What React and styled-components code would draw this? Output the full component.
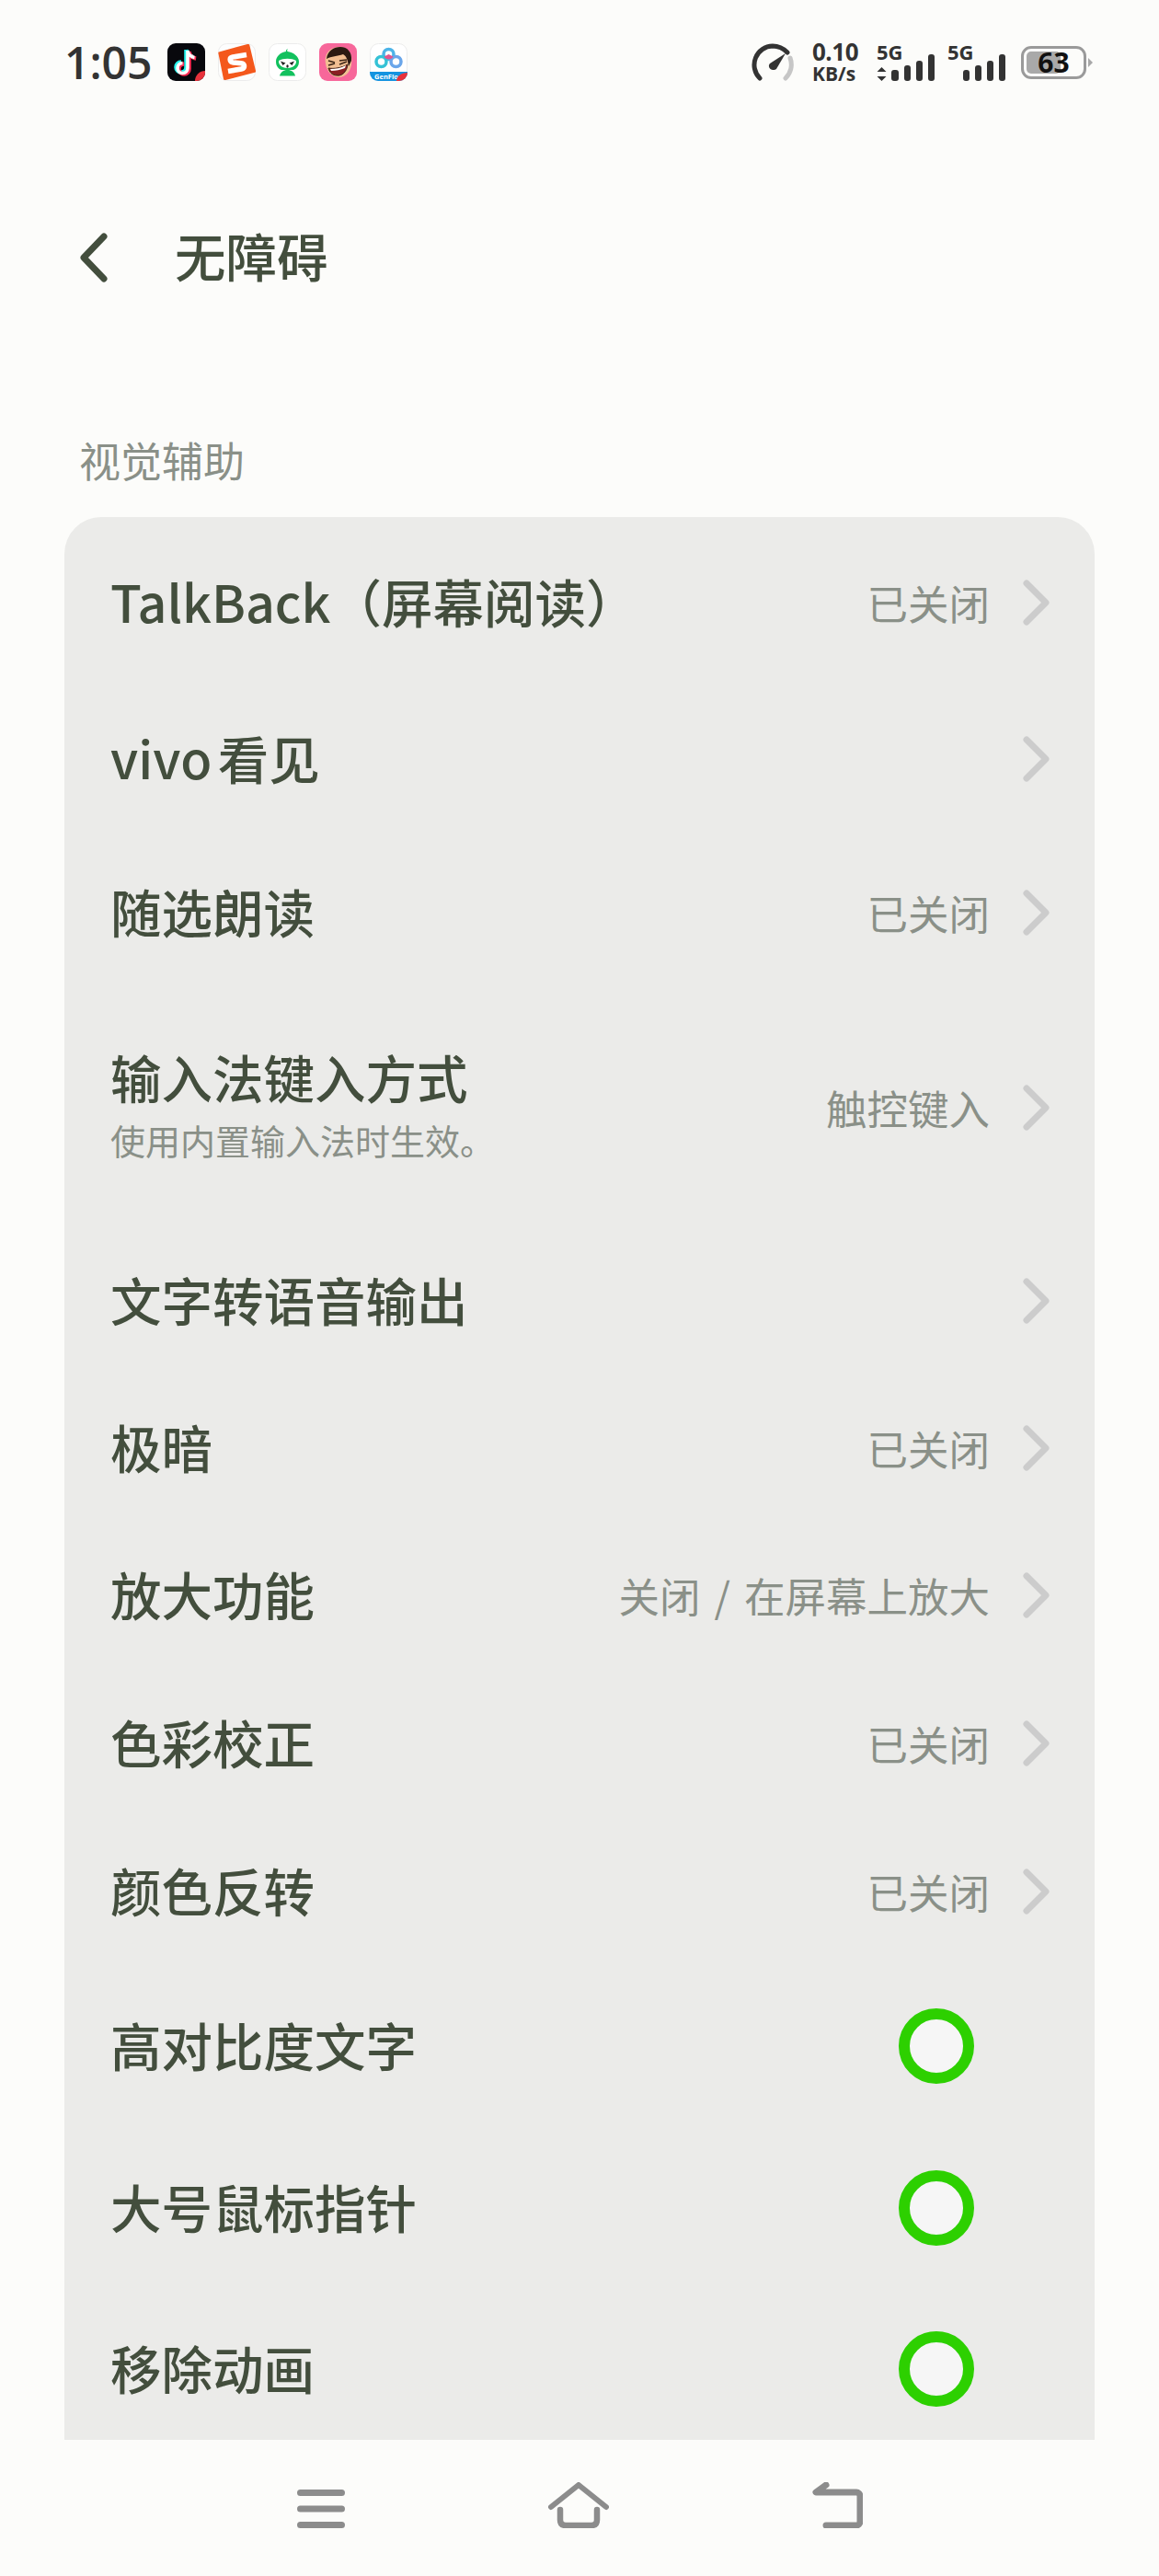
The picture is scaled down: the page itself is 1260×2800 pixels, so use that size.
import React from 'react';
import styled, { createGlobalStyle } from 'styled-components';

const GlobalStyle = createGlobalStyle`
html, body {
  margin: 0;
  padding: 0;
  background: #fcfcfa;
}
`
const Page = styled.div`
font-family: 'Noto Sans CJK SC', 'Noto Sans', sans-serif;
width: 1260px;
height: 2800px;
display: flex;
flex-direction: column;
overflow: hidden;
background: #fcfcfa;
`
const StatusBar = styled.div`
display: flex;
justify-content: space-between;
align-items: center;
height: 41px;
padding: 47px 79px 0 70px;
`
const StatusLeft = styled.div`
display: flex;
align-items: center;
`
const StatusRight = styled.div`
display: flex;
align-items: center;
`
const Time = styled.div`
font-family: 'Open Sans', sans-serif;
font-size: 48px;
font-weight: 600;
line-height: 41px;
color: #333333;
width: 112px;
`
const AppIcons = styled.div`
display: flex;
gap: 14px;
`
const AppIcon = styled.svg`
width: 41px;
height: 41px;
display: block;
`
const Gauge = styled.svg`
width: 46px;
height: 41px;
display: block;
`
const Speed = styled.div`
display: flex;
flex-direction: column;
align-items: flex-start;
font-family: 'Open Sans', sans-serif;
font-weight: 700;
color: #333333;
margin-left: 20px;
width: 50px;
`
const SpeedValue = styled.div`
font-size: 26px;
line-height: 23px;
letter-spacing: -0.5px;
`
const SpeedUnit = styled.div`
font-size: 21px;
line-height: 21px;
margin-top: 2px;
white-space: nowrap;
`
const Signal = styled.div`
position: relative;
width: 63px;
height: 41px;
margin-left: ${(p) => p.$gap}px;
`
const SignalLabel = styled.span`
position: absolute;
left: 0;
top: -3px;
font-family: 'Open Sans', sans-serif;
font-size: 22px;
line-height: 24px;
font-weight: 700;
color: #333333;
`
const SignalBars = styled.svg`
width: 63px;
height: 41px;
display: block;
`
const Battery = styled.div`
position: relative;
box-sizing: border-box;
width: 71px;
height: 36px;
margin-left: 17px;
border: 3px solid #9a9a9a;
border-radius: 11px;
padding: 3px;
&::after {
  content: '';
  position: absolute;
  right: -10px;
  top: 10px;
  width: 0;
  height: 0;
  border-left: 5px solid #a8a8a8;
  border-top: 5px solid transparent;
  border-bottom: 5px solid transparent;
}
`
const BatteryFill = styled.div`
background: #a9a9a9;
height: 100%;
border-radius: 5px;
`
const BatteryText = styled.span`
position: absolute;
left: 0;
right: 0;
top: 0;
bottom: 0;
display: flex;
align-items: center;
justify-content: center;
font-family: 'Open Sans', sans-serif;
font-size: 30px;
font-weight: 700;
color: #111111;
`
const Header = styled.div`
display: flex;
align-items: center;
height: 80px;
padding: 152px 0 0 86px;
`
const BackIcon = styled.svg`
width: 32px;
height: 54px;
display: block;
`
const Title = styled.h1`
margin: 0 0 6px 72px;
font-size: 55.5px;
line-height: 74px;
font-weight: 500;
color: #434e3d;
`
const SectionLabel = styled.div`
font-size: 45px;
line-height: 60px;
color: #8a9088;
margin: 150px 0 0 86px;
height: 61px;
`
const Card = styled.div`
flex: 1;
min-height: 0;
margin: 31px 70px 0 70px;
padding-top: 7px;
background: #ebebe9;
border-radius: 40px 40px 0 0;
overflow: hidden;
`
const Row = styled.div`
box-sizing: border-box;
display: flex;
align-items: center;
height: ${(p) => p.$h}px;
padding: 0 ${(p) => (p.$toggle ? 131 : 49)}px 0 50px;
`
const RowText = styled.div`
flex: 1;
min-width: 0;
`
const RowTitle = styled.div`
font-size: 55.5px;
line-height: 66px;
font-weight: 500;
word-spacing: -6px;
color: #434e3d;
white-space: nowrap;
padding-bottom: 4px;
`
const RowSub = styled.div`
font-size: 38px;
line-height: 44px;
color: #8a9088;
margin: 10px 0 10px 0;
white-space: nowrap;
`
const RowValue = styled.div`
font-size: 44.5px;
line-height: 60px;
word-spacing: 5px;
color: #8a9088;
margin-right: 36px;
white-space: nowrap;
`
const Chevron = styled.svg`
width: 29px;
height: 50px;
display: block;
`
const Toggle = styled.div`
box-sizing: border-box;
width: 82px;
height: 82px;
border: 12px solid #2dd000;
border-radius: 50%;
background: #f6f6f6;
`
const NavBar = styled.div`
height: 148px;
flex-shrink: 0;
display: flex;
align-items: flex-start;
justify-content: center;
gap: 221px;
padding-top: 46px;
box-sizing: border-box;
background: #fcfcfa;
`
const NavIcon = styled.svg`
width: ${(p) => p.$w}px;
height: 50px;
display: block;
`

const rows = [
  { title: 'TalkBack（屏幕阅读）', value: '已关闭', h: 172 },
  { title: 'vivo 看见', h: 167 },
  { title: '随选朗读', value: '已关闭', h: 168 },
  { title: '输入法键入方式', sub: '使用内置输入法时生效。', value: '触控键入', h: 256 },
  { title: '文字转语音输出', h: 163 },
  { title: '极暗', value: '已关闭', h: 158 },
  { title: '放大功能', value: '关闭 / 在屏幕上放大', h: 161 },
  { title: '色彩校正', value: '已关闭', h: 162 },
  { title: '颜色反转', value: '已关闭', h: 160 },
  { title: '高对比度文字', toggle: true, h: 176 },
  { title: '大号鼠标指针', toggle: true, h: 175 },
  { title: '移除动画', toggle: true, h: 175 },
];

const TikTok = () => (
  <AppIcon viewBox="0 0 41 41">
    <rect width="41" height="41" rx="9" fill="#08080d" />
    <path d="M22 8v19a5.500 5.500 0 1 1-5.500-5.500M22 8c.5 4 3.500 7 7.500 7.500" fill="none" stroke="#25f4ee" strokeWidth="4.400" transform="translate(-1.600 -1)" />
    <path d="M22 8v19a5.500 5.500 0 1 1-5.500-5.500M22 8c.5 4 3.500 7 7.500 7.500" fill="none" stroke="#fe2c55" strokeWidth="4.400" transform="translate(1.600 1)" />
    <path d="M22 8v19a5.500 5.500 0 1 1-5.500-5.500M22 8c.5 4 3.500 7 7.500 7.500" fill="none" stroke="#ffffff" strokeWidth="3.600" />
    <path d="M41 30v2a9 9 0 0 1-9 9h-2a11 11 0 0 1 11-11z" fill="#e8323c" />
  </AppIcon>
);

const Sogou = () => (
  <AppIcon viewBox="0 0 41 41">
    <rect x=".5" y=".5" width="40" height="40" rx="9" fill="#fdfdfd" stroke="#ececec" />
    <path d="M1 9.500 32 1c1-.3 2 0 2.300 1L41 30c.2 1 0 1.500-1 1.800L8 40c-1 .3-1.700 0-2-1L.4 11c-.2-.8 0-1.300.6-1.500z" fill="#f4581c" />
    <path d="M31 12.500 16 15c-4 .7-3.500 5.500.5 6l8.500.7c4.500.4 4.500 5.600.5 6.300L11 30.500" fill="none" stroke="#ffffff" strokeWidth="5.600" />
  </AppIcon>
);

const Alien = () => (
  <AppIcon viewBox="0 0 41 41">
    <rect x=".5" y=".5" width="40" height="40" rx="9" fill="#ffffff" stroke="#ececec" />
    <path d="M21 6c-1 1-1 2-.5 3C27 10 33 14 33 20c0 5-3 8-6 9H14c-3-1-6-4-6-9 0-6 5-10 11-11-.5-1 .5-2.500 2-3z" fill="#12c15e" />
    <path d="M11 19c5-3 14-3 19 0 .5 4-3 8-9.500 8S10.500 23 11 19z" fill="#ffffff" />
    <path d="M13 19.500l5.500 2-3 2.500zM28 19.500l-5.500 2 3 2.500z" fill="#222222" />
    <ellipse cx="20.500" cy="25" rx="1.200" ry="1.800" fill="#222222" />
    <path d="M12 35.500c1-4 4-6.500 8.500-6.500s7.500 2.500 8.500 6.500z" fill="#12c15e" />
  </AppIcon>
);

const Face = () => (
  <AppIcon viewBox="0 0 41 41">
    <rect width="41" height="41" rx="9" fill="#f7679a" />
    <path d="M7 22C5 10 13 4 22 4c10 0 15 8 13 19-1 9-8 15-15 14-7-1-12-7-13-15z" fill="#f2bf92" />
    <path d="M8 17C9 8 16 4 23 4c8 0 13 6 12 15l-3 6c-1-6-2-11-6-13-6 2-13 2-18 5z" fill="#2c1a12" />
    <path d="M10 19l7 2M10 24l7-2M22 19l8-1M22 23l8-3" stroke="#3a2415" strokeWidth="1.600" fill="none" />
    <path d="M10 27c6 1 14 0 21-4-1 8-6 13-12 12-5 0-8-4-9-8z" fill="#8a1f22" stroke="#3a2415" strokeWidth="1" />
    <path d="M12 28c5 0 12-1 17-4l-1 3c-5 2-10 3-15 3z" fill="#ffffff" />
  </AppIcon>
);

const GenFlow = () => (
  <AppIcon viewBox="0 0 41 41">
    <rect x=".5" y=".5" width="40" height="40" rx="9" fill="#ffffff" stroke="#ececec" />
    <circle cx="20.500" cy="12" r="5.500" fill="none" stroke="#4cb4e8" strokeWidth="3.500" />
    <circle cx="12.500" cy="20" r="5.500" fill="none" stroke="#35c2d6" strokeWidth="3.500" />
    <circle cx="28.500" cy="20" r="5.500" fill="none" stroke="#6aa6ea" strokeWidth="3.500" />
    <path d="M15.500 14.500c2 4 8 4 10 0l-5-2.500z" fill="#e0558e" />
    <path d="M0 31h41v1a9 9 0 0 1-9 9H9a9 9 0 0 1-9-9z" fill="#1493e0" />
    <text x="18" y="38.500" textAnchor="middle" fontFamily="Open Sans" fontSize="7.500" fontWeight="700" fill="#ffffff">GenFlo</text>
    <path d="M41 32a9 9 0 0 1-9 9h-3c0-5 5-9 12-9z" fill="#e8323c" />
  </AppIcon>
);

const App = () => {
  return (
    <Page>
      <GlobalStyle />
      <StatusBar>
        <StatusLeft>
          <Time>1:05</Time>
          <AppIcons>
            <TikTok />
            <Sogou />
            <Alien />
            <Face />
            <GenFlow />
          </AppIcons>
        </StatusLeft>
        <StatusRight>
          <Gauge viewBox="0 0 46 41">
            <path d="M37 38a20.500 20.500 0 0 0 5-22" fill="none" stroke="#c6c6c6" strokeWidth="5" strokeLinecap="round" />
            <path d="M9 38A20.500 20.500 0 0 1 23 3c6 0 11 2 16 7" fill="none" stroke="#333333" strokeWidth="5" strokeLinecap="round" />
            <path d="M20 22l17-11-10 17c-2 2-5 1-7-.5-1.500-1.500-1.500-4 0-5.500z" fill="#333333" />
          </Gauge>
          <Speed>
            <SpeedValue>0.10</SpeedValue>
            <SpeedUnit>KB/s</SpeedUnit>
          </Speed>
          <Signal $gap={20}>
            <SignalLabel>5G</SignalLabel>
            <SignalBars viewBox="0 0 63 41">
              <path d="M5.500 26l5 5H.5zM5.500 41l-5-5h10z" fill="#333333" />
              <rect x="16" y="29" width="8" height="12" rx="3" fill="#333333" />
              <rect x="30" y="24" width="7" height="17" rx="3" fill="#333333" />
              <rect x="43" y="19" width="7" height="22" rx="3" fill="#333333" />
              <rect x="56" y="12" width="7" height="29" rx="3" fill="#333333" />
            </SignalBars>
          </Signal>
          <Signal $gap={14}>
            <SignalLabel>5G</SignalLabel>
            <SignalBars viewBox="0 0 63 41">
              <rect x="17" y="29" width="7" height="12" rx="3" fill="#333333" />
              <rect x="30" y="24" width="7" height="17" rx="3" fill="#333333" />
              <rect x="43" y="19" width="7" height="22" rx="3" fill="#333333" />
              <rect x="56" y="12" width="7" height="29" rx="3" fill="#333333" />
            </SignalBars>
          </Signal>
          <Battery>
            <BatteryFill style={{ width: '63%' }} />
            <BatteryText>63</BatteryText>
          </Battery>
        </StatusRight>
      </StatusBar>

      <Header>
        <BackIcon viewBox="0 0 32 54">
          <path d="M27 4 5 27l22 23" fill="none" stroke="#434e3d" strokeWidth="7" strokeLinecap="round" strokeLinejoin="round" />
        </BackIcon>
        <Title>无障碍</Title>
      </Header>

      <SectionLabel>视觉辅助</SectionLabel>

      <Card>
        {rows.map((row) => (
          <Row key={row.title} $h={row.h} $toggle={row.toggle}>
            <RowText>
              <RowTitle>{row.title}</RowTitle>
              {row.sub && <RowSub>{row.sub}</RowSub>}
            </RowText>
            {row.value && <RowValue>{row.value}</RowValue>}
            {row.toggle ? (
              <Toggle />
            ) : (
              <Chevron viewBox="0 0 29 50">
                <path d="M4 4l21 21L4 46" fill="none" stroke="#cccccc" strokeWidth="7" strokeLinecap="round" strokeLinejoin="round" />
              </Chevron>
            )}
          </Row>
        ))}
      </Card>

      <NavBar>
        <NavIcon $w={52} viewBox="0 0 52 50">
          <path d="M3.500 11.500h45M3.500 29h45M3.500 46.500h45" fill="none" stroke="#8c8c8c" strokeWidth="7" strokeLinecap="round" />
        </NavIcon>
        <NavIcon $w={66} viewBox="0 0 66 50">
          <path d="M3 27 33 3l30 24" fill="none" stroke="#8c8c8c" strokeWidth="6" strokeLinecap="round" strokeLinejoin="round" />
          <path d="M13 30v11c0 4 2 6 6 6h28c4 0 6-2 6-6V30" fill="none" stroke="#8c8c8c" strokeWidth="6.500" strokeLinecap="round" />
        </NavIcon>
        <NavIcon $w={55} viewBox="0 0 55 50">
          <path d="M15 3 4 11h44c2 0 4 2 4 4v28c0 2-2 4-4 4H15" fill="none" stroke="#8c8c8c" strokeWidth="7" strokeLinecap="round" strokeLinejoin="round" />
        </NavIcon>
      </NavBar>
    </Page>
  );
};

export default App;
